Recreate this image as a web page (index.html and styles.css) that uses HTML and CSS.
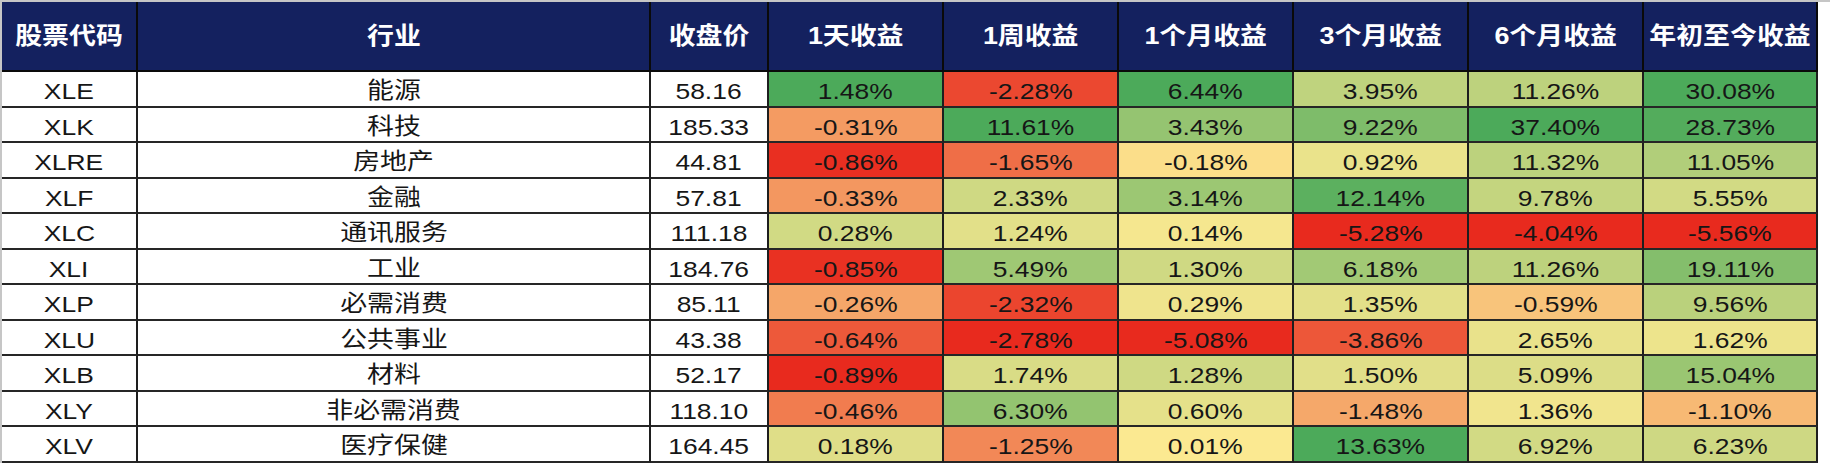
FILE: index.html
```html
<!DOCTYPE html>
<html lang="zh-CN">
<head>
<meta charset="utf-8">
<title>行业ETF收益</title>
<link rel="stylesheet" href="styles.css">
</head>
<body>
<div class="sheet">
<table class="returns">
<colgroup>
<col class="w-code"><col class="w-ind"><col class="w-px">
<col class="w-r"><col class="w-r"><col class="w-r"><col class="w-r"><col class="w-r"><col class="w-last">
</colgroup>
<thead>
<tr>
<th><span class="t">股票代码</span></th>
<th><span class="t">行业</span></th>
<th><span class="t">收盘价</span></th>
<th><span class="t">1天收益</span></th>
<th><span class="t">1周收益</span></th>
<th><span class="t">1个月收益</span></th>
<th><span class="t">3个月收益</span></th>
<th><span class="t">6个月收益</span></th>
<th><span class="t">年初至今收益</span></th>
</tr>
</thead>
<tbody>
<tr><td><span class="t">XLE</span></td><td class="ind"><span class="t">能源</span></td><td><span class="t">58.16</span></td><td class="r"><span class="t">1.48%</span></td><td class="r"><span class="t">-2.28%</span></td><td class="r"><span class="t">6.44%</span></td><td class="r"><span class="t">3.95%</span></td><td class="r"><span class="t">11.26%</span></td><td class="r"><span class="t">30.08%</span></td></tr>
<tr><td><span class="t">XLK</span></td><td class="ind"><span class="t">科技</span></td><td><span class="t">185.33</span></td><td class="r"><span class="t">-0.31%</span></td><td class="r"><span class="t">11.61%</span></td><td class="r"><span class="t">3.43%</span></td><td class="r"><span class="t">9.22%</span></td><td class="r"><span class="t">37.40%</span></td><td class="r"><span class="t">28.73%</span></td></tr>
<tr><td><span class="t">XLRE</span></td><td class="ind"><span class="t">房地产</span></td><td><span class="t">44.81</span></td><td class="r"><span class="t">-0.86%</span></td><td class="r"><span class="t">-1.65%</span></td><td class="r"><span class="t">-0.18%</span></td><td class="r"><span class="t">0.92%</span></td><td class="r"><span class="t">11.32%</span></td><td class="r"><span class="t">11.05%</span></td></tr>
<tr><td><span class="t">XLF</span></td><td class="ind"><span class="t">金融</span></td><td><span class="t">57.81</span></td><td class="r"><span class="t">-0.33%</span></td><td class="r"><span class="t">2.33%</span></td><td class="r"><span class="t">3.14%</span></td><td class="r"><span class="t">12.14%</span></td><td class="r"><span class="t">9.78%</span></td><td class="r"><span class="t">5.55%</span></td></tr>
<tr><td><span class="t">XLC</span></td><td class="ind"><span class="t">通讯服务</span></td><td><span class="t">111.18</span></td><td class="r"><span class="t">0.28%</span></td><td class="r"><span class="t">1.24%</span></td><td class="r"><span class="t">0.14%</span></td><td class="r"><span class="t">-5.28%</span></td><td class="r"><span class="t">-4.04%</span></td><td class="r"><span class="t">-5.56%</span></td></tr>
<tr><td><span class="t">XLI</span></td><td class="ind"><span class="t">工业</span></td><td><span class="t">184.76</span></td><td class="r"><span class="t">-0.85%</span></td><td class="r"><span class="t">5.49%</span></td><td class="r"><span class="t">1.30%</span></td><td class="r"><span class="t">6.18%</span></td><td class="r"><span class="t">11.26%</span></td><td class="r"><span class="t">19.11%</span></td></tr>
<tr><td><span class="t">XLP</span></td><td class="ind"><span class="t">必需消费</span></td><td><span class="t">85.11</span></td><td class="r"><span class="t">-0.26%</span></td><td class="r"><span class="t">-2.32%</span></td><td class="r"><span class="t">0.29%</span></td><td class="r"><span class="t">1.35%</span></td><td class="r"><span class="t">-0.59%</span></td><td class="r"><span class="t">9.56%</span></td></tr>
<tr><td><span class="t">XLU</span></td><td class="ind"><span class="t">公共事业</span></td><td><span class="t">43.38</span></td><td class="r"><span class="t">-0.64%</span></td><td class="r"><span class="t">-2.78%</span></td><td class="r"><span class="t">-5.08%</span></td><td class="r"><span class="t">-3.86%</span></td><td class="r"><span class="t">2.65%</span></td><td class="r"><span class="t">1.62%</span></td></tr>
<tr><td><span class="t">XLB</span></td><td class="ind"><span class="t">材料</span></td><td><span class="t">52.17</span></td><td class="r"><span class="t">-0.89%</span></td><td class="r"><span class="t">1.74%</span></td><td class="r"><span class="t">1.28%</span></td><td class="r"><span class="t">1.50%</span></td><td class="r"><span class="t">5.09%</span></td><td class="r"><span class="t">15.04%</span></td></tr>
<tr><td><span class="t">XLY</span></td><td class="ind"><span class="t">非必需消费</span></td><td><span class="t">118.10</span></td><td class="r"><span class="t">-0.46%</span></td><td class="r"><span class="t">6.30%</span></td><td class="r"><span class="t">0.60%</span></td><td class="r"><span class="t">-1.48%</span></td><td class="r"><span class="t">1.36%</span></td><td class="r"><span class="t">-1.10%</span></td></tr>
<tr><td><span class="t">XLV</span></td><td class="ind"><span class="t">医疗保健</span></td><td><span class="t">164.45</span></td><td class="r"><span class="t">0.18%</span></td><td class="r"><span class="t">-1.25%</span></td><td class="r"><span class="t">0.01%</span></td><td class="r"><span class="t">13.63%</span></td><td class="r"><span class="t">6.92%</span></td><td class="r"><span class="t">6.23%</span></td></tr>
</tbody>
</table>
</div>
<script src="script.js"></script>
</body>
</html>
```

FILE: styles.css
```css
html, body {
  margin: 0;
  background: #ffffff;
}

.sheet {
  border-top: 2px solid #c6c6c6;
}

.returns {
  border-collapse: separate;
  border-spacing: 0;
  table-layout: fixed;
  width: 1818px;
  border-left: 2px solid #c6c6c6;
}

.w-code { width: 136px; }
.w-ind { width: 513px; }
.w-px { width: 118px; }
.w-r { width: 175px; }
.w-last { width: 174px; }

.returns th,
.returns td {
  padding: 0;
  border-right: 2px solid #1e1e1e;
  border-bottom: 2px solid #262626;
  text-align: center;
  vertical-align: middle;
  white-space: nowrap;
  overflow: hidden;
}

.returns thead tr { height: 70px; }
.returns tbody tr { height: 35.5px; }

.returns th {
  background: #14215f;
  color: #ffffff;
  font-family: "Liberation Sans", "Noto Sans CJK SC", sans-serif;
  font-weight: bold;
  font-size: 24px;
  line-height: 24px;
  border-right-color: #0a0a0a;
  border-bottom-color: #0a0a0a;
}

.returns td {
  background: #ffffff;
  color: #161616;
  font-family: "Liberation Sans", "Noto Sans CJK SC", sans-serif;
  font-size: 22px;
  line-height: 22px;
  padding-top: 7px;
}

.returns td.ind {
  font-family: "Noto Sans CJK SC", sans-serif;
  font-size: 23px;
  line-height: 23px;
  padding-top: 0;
}

.t {
  display: inline-block;
  transform: scaleX(1.2);
}

.returns th .t { transform: scaleX(1.12); }
.returns td.ind .t { transform: scaleX(1.17); }
```

FILE: script.js
```js
(function () {
  var Y = [252, 233, 145], G = [76, 170, 90], R = [232, 42, 30];
  function mix(a, b, t) {
    return 'rgb(' + a.map(function (v, i) { return Math.round(v + (b[i] - v) * t); }).join(',') + ')';
  }
  var rows = Array.prototype.slice.call(document.querySelectorAll('.returns tbody tr'));
  var cols = {};
  rows.forEach(function (tr) {
    Array.prototype.slice.call(tr.querySelectorAll('td.r')).forEach(function (td, i) {
      (cols[i] = cols[i] || []).push(td);
    });
  });
  Object.keys(cols).forEach(function (k) {
    var cells = cols[k];
    var vals = cells.map(function (td) { return parseFloat(td.textContent); });
    var mx = Math.max.apply(null, vals), mn = Math.min.apply(null, vals);
    cells.forEach(function (td, i) {
      var v = vals[i], c;
      if (v >= 0) c = mix(Y, G, Math.pow(mx > 0 ? v / mx : 0, 0.85));
      else c = mix(Y, R, Math.pow(mn < 0 ? v / mn : 0, 0.85));
      td.style.backgroundColor = c;
    });
  });
})();
```
